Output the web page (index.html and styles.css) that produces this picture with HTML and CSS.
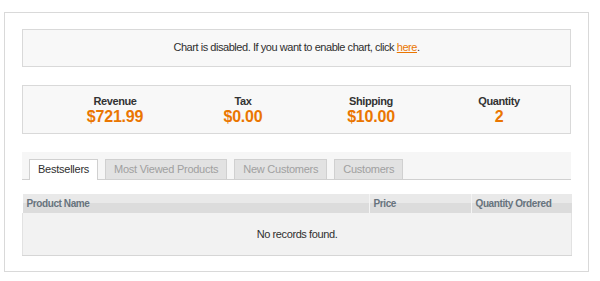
FILE: index.html
```html
<!DOCTYPE html>
<html lang="en">
<head>
  <meta charset="UTF-8">
  <meta name="viewport" content="width=device-width, initial-scale=1.0">
  <link rel="stylesheet" href="styles.css">
  <title>Dashboard</title>
</head>
<body>
  <div class="dashboard">
    <div class="chart-notice">
      Chart is disabled. If you want to enable chart, click <a href="#">here</a>.
    </div>

    <div class="totals">
      <div class="total">
        <span class="label">Revenue</span>
        <span class="amount">$721.99</span>
      </div>
      <div class="total">
        <span class="label">Tax</span>
        <span class="amount">$0.00</span>
      </div>
      <div class="total">
        <span class="label">Shipping</span>
        <span class="amount">$10.00</span>
      </div>
      <div class="total">
        <span class="label">Quantity</span>
        <span class="amount">2</span>
      </div>
    </div>

    <ul class="tabs">
      <li class="tab active">Bestsellers</li>
      <li class="tab">Most Viewed Products</li>
      <li class="tab">New Customers</li>
      <li class="tab">Customers</li>
    </ul>

    <table class="grid">
      <thead>
        <tr>
          <th class="col-name">Product Name</th>
          <th class="col-price">Price</th>
          <th class="col-qty">Quantity Ordered</th>
        </tr>
      </thead>
      <tbody>
        <tr>
          <td colspan="3" class="empty">No records found.</td>
        </tr>
      </tbody>
    </table>
  </div>
</body>
</html>
```

FILE: styles.css
```css
body {
  margin: 0;
  padding: 12px 0 0 4px;
  font-family: "Liberation Sans", Arial, sans-serif;
  font-size: 11px;
  letter-spacing: -0.4px;
  color: #2f2f2f;
  background-color: #fff;
}

.dashboard {
  width: 549px;
  height: 242px;
  padding: 16px 17px 0 17px;
  border: 1px solid #d9d9d9;
}

.chart-notice {
  height: 36px;
  line-height: 34px;
  text-align: center;
  letter-spacing: -0.45px;
  background-color: #f8f8f8;
  border: 1px solid #d9d9d9;
}

.chart-notice a {
  color: #ea7601;
  text-decoration: underline;
}

.totals {
  display: grid;
  grid-template-columns: repeat(4, 128px);
  height: 47px;
  margin-top: 18px;
  padding-left: 28px;
  background-color: #f8f8f8;
  border: 1px solid #d9d9d9;
}

.total {
  display: flex;
  flex-direction: column;
  align-items: center;
  padding-top: 9px;
}

.label {
  font-weight: bold;
  font-size: 11px;
  line-height: 13px;
  color: #333;
}

.amount {
  font-weight: bold;
  font-size: 16px;
  line-height: 17px;
  letter-spacing: -0.2px;
  color: #ea7601;
}

.tabs {
  display: flex;
  gap: 7px;
  list-style: none;
  margin: 18px 0 0 0;
  padding: 7px 0 0 7px;
  height: 20px;
  background-color: #f6f6f6;
  border-bottom: 1px solid #d0d0d0;
}

.tab {
  height: 19px;
  line-height: 19px;
  padding: 0 8px;
  letter-spacing: -0.25px;
  color: #a0a0a0;
  background-color: #e2e2e2;
  border: 1px solid #d0d0d0;
  border-bottom: none;
}

.tab.active {
  height: 20px;
  color: #2f2f2f;
  background-color: #fff;
}

.grid {
  width: 550px;
  margin-top: 14px;
  border-collapse: collapse;
}

.grid th {
  height: 19px;
  padding: 0 4px;
  text-align: left;
  font-size: 10px;
  font-weight: bold;
  color: #67737d;
  background: linear-gradient(to bottom, #e9e9e9 0, #e9e9e9 9px, #dcdcdc 9px);
  border-left: 1px solid #f4f4f4;
}

.grid th:first-child {
  border-left: none;
}

.col-name {
  width: 338px;
}

.col-price {
  width: 93px;
}

.empty {
  height: 40px;
  text-align: center;
  background-color: #f2f2f2;
  border: 1px solid #e2e2e2;
  border-top: none;
  border-bottom-color: #d6d6d6;
}
```
